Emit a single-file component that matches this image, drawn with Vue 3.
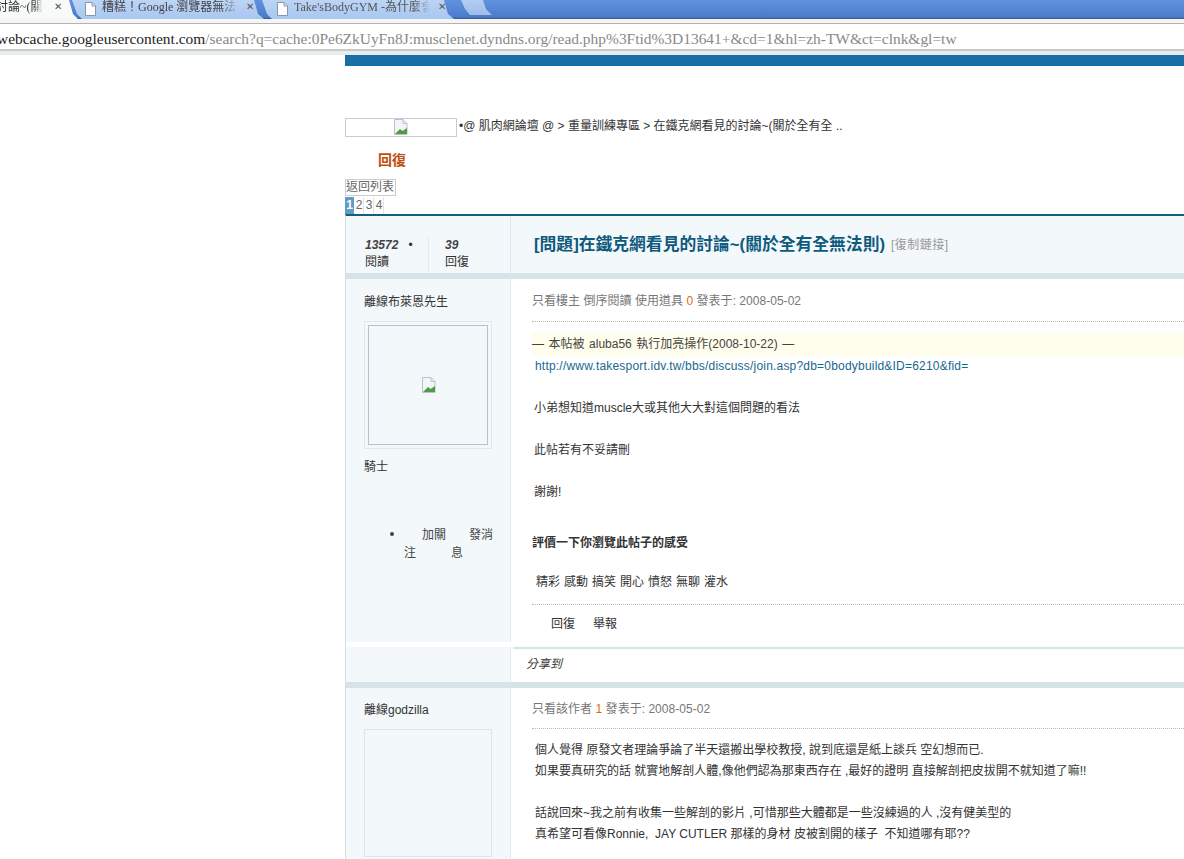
<script setup>
const ratings = ['精彩','感動','搞笑','開心','憤怒','無聊','灌水']
</script>

<template>
  <div class="page">
    <header class="chrome">
      <div class="tabstrip">
        <div class="tab active">
          <span class="tab-title first">討論~(關於</span><span class="x">✕</span>
        </div>
        <div class="tab second">
          <svg class="doc" width="11" height="14" viewBox="0 0 11 14"><path d="M.5.5h6.500l3.500 3.500v9.500h-10z" fill="#fff" stroke="#8a97a8"/><path d="M7 .5v3.500h3.500" fill="none" stroke="#8a97a8"/></svg>
          <span class="tab-title">糟糕！Google 瀏覽器無法</span><span class="x">✕</span>
        </div>
        <div class="tab third">
          <svg class="doc" width="11" height="14" viewBox="0 0 11 14"><path d="M.5.5h6.500l3.500 3.500v9.500h-10z" fill="#fff" stroke="#8a97a8"/><path d="M7 .5v3.500h3.500" fill="none" stroke="#8a97a8"/></svg>
          <span class="tab-title">Take'sBodyGYM -為什麼會</span><span class="x">✕</span>
        </div>
        <div class="newtab"></div>
      </div>
      <div class="addressbar">
        <div class="url"><span class="host">webcache.googleusercontent.com</span>/search?q=cache:0Pe6ZkUyFn8J:musclenet.dyndns.org/read.php%3Ftid%3D13641+&amp;cd=1&amp;hl=zh-TW&amp;ct=clnk&amp;gl=tw</div>
      </div>
    </header>

    <main class="content">
      <div class="topbar"></div>

      <div class="crumbs">
        <div class="logo-box"><svg class="broken" width="15" height="16" viewBox="0 0 15 16"><path d="M1.500.5h8.500l4 4v11h-12.500z" fill="#f1f4f8" stroke="#b9c2cc"/><path d="M10 .5v4h4" fill="none" stroke="#b9c2cc"/><path d="M2 15l5-5 2.500 2 4.500-3v6z" fill="#4f9a45"/></svg></div>
        <span class="crumb-text">•@ 肌肉網論壇 @ &gt; 重量訓練專區 &gt; 在鐵克網看見的討論~(關於全有全 ..</span>
      </div>

      <div class="reply-big">回復</div>
      <div class="backbox">返回列表</div>
      <div class="pager"><b>1</b><span>2</span><span>3</span><span>4</span></div>

      <section class="thread">
        <div class="thread-head">
          <div class="stats">
            <div class="stat one"><i>13572</i><em>•</em><span>閱讀</span></div>
            <div class="stat two"><i>39</i><span>回復</span></div>
          </div>
          <div class="subject">
            <h1>[問題]在鐵克網看見的討論~(關於全有全無法則)</h1>
            <span class="copy">[復制鏈接]</span>
          </div>
        </div>
        <div class="band"></div>

        <article class="post">
          <aside class="side tall">
            <div class="name">離線布萊恩先生</div>
            <div class="avatar-frame">
              <div class="avatar"><svg width="15" height="16" viewBox="0 0 15 16"><path d="M1.500.5h8.500l4 4v11h-12.500z" fill="#f1f4f8" stroke="#b9c2cc"/><path d="M10 .5v4h4" fill="none" stroke="#b9c2cc"/><path d="M2 15l5-5 2.500 2 4.500-3v6z" fill="#4f9a45"/></svg></div>
            </div>
            <div class="rank">騎士</div>
            <ul class="actions">
              <li><span>加關注</span><span>發消息</span></li>
            </ul>
          </aside>
          <div class="body">
            <div class="meta">只看樓主 倒序閱讀 使用道具 <span class="num">0</span> 發表于: 2008-05-02</div>
            <div class="notice">— 本帖被 aluba56 執行加亮操作(2008-10-22) —</div>
            <a class="link">http://www.takesport.idv.tw/bbs/discuss/join.asp?db=0bodybuild&amp;ID=6210&amp;fid=</a>
            <p class="line l1">小弟想知道muscle大或其他大大對這個問題的看法</p>
            <p class="line l2">此帖若有不妥請刪</p>
            <p class="line l2">謝謝!</p>
            <div class="rate-title">評價一下你瀏覽此帖子的感受</div>
            <div class="ratings"><span v-for="r in ratings" :key="r">{{ r }}</span></div>
            <div class="post-actions"><span>回復</span><span>舉報</span></div>
          </div>
        </article>

        <div class="share-row">
          <div class="side share-side"></div>
          <div class="share"><i>分享到</i></div>
        </div>
        <div class="band wide"></div>

        <article class="post second-post">
          <aside class="side">
            <div class="name">離線godzilla</div>
            <div class="avatar-empty"></div>
          </aside>
          <div class="body">
            <div class="meta">只看該作者 <span class="num">1</span> 發表于: 2008-05-02</div>
            <div class="text">
              <p>個人覺得 原發文者理論爭論了半天還搬出學校教授, 說到底還是紙上談兵 空幻想而已.</p>
              <p>如果要真研究的話 就實地解剖人體,像他們認為那東西存在 ,最好的證明 直接解剖把皮拔開不就知道了嘛!!</p>
              <p class="gap">話說回來~我之前有收集一些解剖的影片 ,可惜那些大體都是一些沒練過的人 ,沒有健美型的</p>
              <p>真希望可看像Ronnie,&nbsp; JAY CUTLER 那樣的身材 皮被割開的樣子&nbsp; 不知道哪有耶??</p>
            </div>
          </div>
        </article>
      </section>
    </main>
  </div>
</template>

<style>
html, body { margin: 0; background: #fff; overflow: hidden; }
</style>

<style scoped>
.page {
  width: 1184px;
  height: 859px;
  overflow: hidden;
  font-family: "Liberation Sans", "Noto Sans CJK TC", sans-serif;
  font-size: 12px;
  color: #333;
  background: #fff;
}
.chrome { height: 55px; display: flex; flex-direction: column; }
.tabstrip {
  height: 19px;
  flex: none;
  display: flex;
  overflow: hidden;
  background: linear-gradient(#6092de, #4a7ccb 90%, #35568c);
}
.tab {
  position: relative;
  height: 19px;
  display: flex;
  align-items: center;
  flex: none;
  box-sizing: border-box;
  padding-bottom: 5px;
  font-family: "Liberation Serif", "Noto Sans CJK TC", serif;
  font-size: 12px;
  line-height: 14px;
  color: #333;
  white-space: nowrap;
}
.tab > * { position: relative; }
.tab::before {
  content: "";
  position: absolute;
  inset: 0;
}
.tab.active { width: 78px; }
.tab.active::before { background: #f8fafa; clip-path: polygon(0 0, 69px 0, 73px 14px, 78px 19px, 0 19px); }
.first { width: 47px; overflow: hidden; margin-left: -4px; margin-right: 11px; -webkit-mask-image: linear-gradient(90deg, #000 80%, transparent); mask-image: linear-gradient(90deg, #000 80%, transparent); }
.x { font-size: 10px; font-weight: 700; color: #555; font-family: "DejaVu Sans", sans-serif; }
.tab.second, .tab.third { width: 192px; }
.tab.second { margin-left: -6px; padding-left: 13px; }
.tab.third { margin-left: -2px; padding-left: 15px; }
.tab.second::before, .tab.third::before { background: linear-gradient(#bcd4f5, #a9c7f0); clip-path: polygon(0 0, 182px 0, 186px 14px, 192px 19px, 10px 19px, 5px 14px); }
.doc { flex: none; margin-right: 6px; margin-top: 3px; }
.second .tab-title, .third .tab-title { width: 136px; overflow: hidden; margin-right: 8px; color: #444; -webkit-mask-image: linear-gradient(90deg, #000 88%, transparent); mask-image: linear-gradient(90deg, #000 88%, transparent); }
.third .tab-title { color: #555; }
.newtab { width: 32px; height: 15px; flex: none; margin-left: 7px; background: linear-gradient(#b3cdf2, #9fbde9); clip-path: polygon(0 0, 22px 0, 25px 9px, 31px 15px, 9px 15px, 4px 9px); }
.addressbar {
  height: 36px;
  flex: none;
  box-sizing: border-box;
  background: #fff;
  border-top: 4px solid #f4f7f1;
  border-bottom: 4px solid #e6edf0;
  display: flex;
  align-items: center;
  overflow: hidden;
  box-shadow: inset 0 1px 0 #b8aeb4, inset 0 -2px 0 #c9c9c5;
}
.url {
  font-family: "Liberation Serif", serif;
  font-size: 15.45px;
  color: #888;
  white-space: nowrap;
  margin-left: -3px;
  margin-top: 3px;
}
.host { color: #222; }

.content { margin-left: 345px; width: 839px; }
.topbar { height: 11px; background: #1a6ea8; }
.crumbs { display: flex; align-items: center; margin-top: 51px; height: 20px; }
.logo-box { width: 110px; height: 17px; border: 1px solid #ccc; display: flex; justify-content: center; align-items: center; flex: none; margin-right: 2px; }
.broken { display: block; margin-left: -2px; }
.crumb-text { color: #333; white-space: nowrap; height: 18px; line-height: 16px; }
.reply-big { margin: 13px 0 0 33px; height: 20px; line-height: 20px; font-size: 14px; font-weight: 700; color: #c05010; }
.backbox { display: inline-block; margin-top: 9px; border: 1px solid #ccc; padding: 0 1px 0 0; height: 15px; line-height: 15px; color: #666; vertical-align: top; }
.pager { display: flex; margin-top: 1px; height: 17px; line-height: 17px; font-size: 12px; color: #666; }
.pager b { width: 9px; text-align: center; background: #5f9cc6; color: #fff; }
.pager span { width: 8px; margin-left: 1px; text-align: center; border-right: 1px solid #e4e4e4; }

.thread { margin-top: 0; border-left: 1px solid #d5dfe6; border-top: 2px solid #1a5a80; }
.thread-head { display: flex; height: 57px; }
.stats { width: 165px; flex: none; box-sizing: border-box; background: #f3f8fb; border-right: 1px solid #dfe8ee; display: flex; padding: 21px 0 0 19px; }
.stat { display: flex; flex-wrap: wrap; align-content: flex-start; }
.stat i { font-weight: 700; font-size: 12px; color: #444; height: 17px; line-height: 17px; }
.stat em { font-style: normal; margin-left: 10px; height: 17px; line-height: 17px; }
.stat span { width: 100%; height: 17px; line-height: 17px; }
.stat.one { width: 63px; height: 35px; border-right: 1px solid #e3ebf0; }
.stat.two { margin-left: 16px; }
.subject { flex: 1; background: #f3f8fb; display: flex; align-items: center; padding: 0 0 3px 23px; white-space: nowrap; overflow: hidden; }
.subject h1 { margin: 0; font-size: 16.8px; font-weight: 700; color: #0e5a7d; }
.copy { margin-left: 6px; font-size: 12px; letter-spacing: .5px; color: #999; }
.band { height: 6px; background: #d5e4e8; }
.band.wide { margin-top: 0; }

.post { display: flex; }
.side { width: 165px; flex: none; box-sizing: border-box; background: #f3f8fb; border-right: 1px solid #dfe8ee; padding: 15px 0 0 18px; }
.side.tall { height: 363px; }
.name { height: 16px; line-height: 16px; color: #333; }
.avatar-frame { margin-top: 11px; width: 128px; height: 128px; box-sizing: border-box; border: 1px solid #e1e7ea; padding: 3px; }
.avatar { width: 120px; height: 120px; box-sizing: border-box; border: 1px solid #b5c2cc; display: flex; align-items: center; justify-content: center; }
.rank { margin-top: 10px; height: 16px; line-height: 16px; }
.actions { margin: 51px 0 0; padding: 0 0 0 40px; color: #444; }
.actions li { list-style: disc outside; width: 100px; }
.actions li span { display: inline-block; width: 42px; height: 36px; line-height: 18px; margin-right: 5px; text-indent: 18px; vertical-align: top; }

.body { flex: 1; padding: 14px 0 0 21px; min-width: 0; }
.meta { height: 28px; line-height: 16px; color: #777; border-bottom: 1px dotted #bbb; letter-spacing: .03px; }
.num { color: #e06a10; }
.notice { margin-top: 11px; height: 23px; line-height: 22px; background: #fffdeb; color: #444; word-spacing: 1.2px; }
.link { display: block; margin-left: 3px; height: 20px; line-height: 20px; margin-top: 0; color: #17688f; white-space: nowrap; letter-spacing: .2px; }
.line { margin: 0 0 0 2px; height: 20px; line-height: 20px; color: #333; }
.l1, .l2 { margin-top: 22px; }
.rate-title { margin-top: 32px; font-weight: 700; height: 18px; line-height: 18px; color: #333; }
.ratings { margin: 21px 0 0 4px; display: flex; gap: 4px; height: 18px; line-height: 18px; }
.post-actions { margin-top: 13px; padding: 10px 0 0 19px; border-top: 1px dotted #bbb; display: flex; gap: 18px; height: 18px; line-height: 18px; }

.share-row { display: flex; height: 35px; margin-top: 5px; }
.share-side { padding: 0; }
.share { flex: 1; border-top: 2px solid #d5e4e8; padding: 6px 0 0 13px; height: 18px; line-height: 18px; color: #333; margin-left: 2px; }
.share i { font-size: 12px; }

.second-post .side { height: 180px; padding-top: 14px; }
.avatar-empty { margin-top: 11px; width: 128px; height: 128px; box-sizing: border-box; border: 1px solid #dfe6ea; }
.second-post .meta { height: 27px; padding-top: 0; }
.second-post .body { padding-top: 13px; }
.text { margin-top: 11px; color: #333; padding-left: 3px; white-space: nowrap; }
.text p { margin: 0; height: 21px; line-height: 21px; }
.text .gap { margin-top: 21px; }
</style>
